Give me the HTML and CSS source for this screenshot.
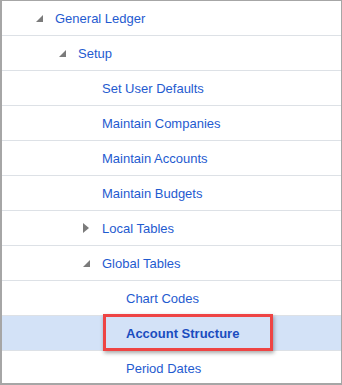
FILE: index.html
```html
<!DOCTYPE html>
<html>
<head>
  <title>Navigator</title>
  <link rel="stylesheet" href="styles.css">
</head>
<body>
  <div class="tree">
    <div class="row lvl1"><span class="toggle open"></span><a>General Ledger</a></div>
    <div class="row lvl2"><span class="toggle open"></span><a>Setup</a></div>
    <div class="row lvl3"><span class="toggle"></span><a>Set User Defaults</a></div>
    <div class="row lvl3"><span class="toggle"></span><a>Maintain Companies</a></div>
    <div class="row lvl3"><span class="toggle"></span><a>Maintain Accounts</a></div>
    <div class="row lvl3"><span class="toggle"></span><a>Maintain Budgets</a></div>
    <div class="row lvl3"><span class="toggle closed"></span><a>Local Tables</a></div>
    <div class="row lvl3"><span class="toggle open"></span><a>Global Tables</a></div>
    <div class="row lvl4"><span class="toggle"></span><a>Chart Codes</a></div>
    <div class="row lvl4 selected"><span class="toggle"></span><a>Account Structure</a><span class="callout"></span></div>
    <div class="row lvl4"><span class="toggle"></span><a>Period Dates</a></div>
  </div>
</body>
</html>
```

FILE: styles.css
```css
html, body {
  margin: 0;
  padding: 0;
  background: #fff;
}

.tree {
  width: 342px;
  height: 385px;
  box-sizing: border-box;
  border: 1px solid #a6a6a6;
  border-left-width: 2px;
  border-bottom-width: 2px;
  overflow: hidden;
  font-family: "Liberation Sans", Arial, sans-serif;
  font-size: 13px;
}

.row {
  position: relative;
  display: flex;
  align-items: center;
  height: 34px;
  border-bottom: 1px solid #dde1e6;
}

.row a {
  color: #1f5bd0;
  cursor: pointer;
}

.lvl1 { padding-left: 32px; }
.lvl2 { padding-left: 55px; }
.lvl3 { padding-left: 79px; }
.lvl4 { padding-left: 103px; }

.toggle {
  width: 21px;
  height: 10px;
  position: relative;
  flex: none;
}

.toggle.open::before {
  content: "";
  position: absolute;
  left: 2px;
  top: 2px;
  width: 0;
  height: 0;
  border-left: 7px solid transparent;
  border-bottom: 7px solid #7b7b7b;
}

.toggle.closed::before {
  content: "";
  position: absolute;
  left: 2px;
  top: 0;
  width: 0;
  height: 0;
  border-top: 5px solid transparent;
  border-bottom: 5px solid transparent;
  border-left: 6px solid #7b7b7b;
}

.selected {
  background: #d3e2f7;
}

.selected a {
  font-weight: bold;
  color: #1a4cbf;
}

.callout {
  position: absolute;
  left: 101px;
  top: -2px;
  width: 164px;
  height: 31px;
  border: 3px solid #ee4444;
  box-shadow: 1px 2px 4px rgba(0, 0, 0, 0.35);
}
```
